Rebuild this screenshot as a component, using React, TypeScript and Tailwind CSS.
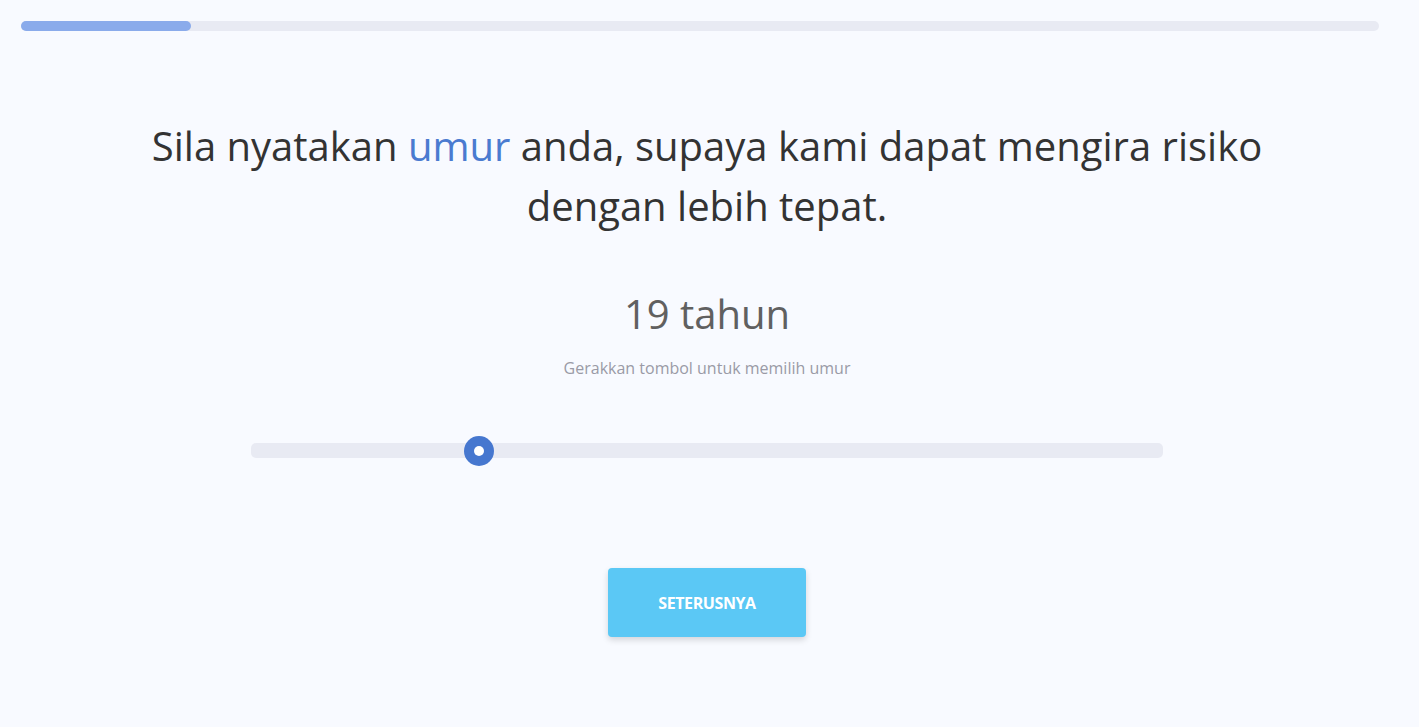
export default function App() {
  const age = 19;
  const pct = 25;
  return (
    <div
      className="min-h-screen w-full bg-[#f8faff] text-[#333]"
      style={{ fontFamily: '"Open Sans", "Noto Sans", sans-serif' }}
    >
      <div className="px-[21px] pt-[21px]">
        <div className="h-[10px] w-[1358px] rounded-full bg-[#e8eaf3]">
          <div className="h-full w-[170px] rounded-full bg-[#8aabeb]" />
        </div>
      </div>

      <div className="flex flex-col items-center pr-[5px]">
        <h1 className="mt-[85px] w-[1140px] text-center text-[40px] leading-[60px] font-normal text-[#333]">
          Sila nyatakan <span className="text-[#4a7bd0]">umur</span> anda, supaya kami dapat mengira risiko
          dengan lebih tepat.
        </h1>

        <div className="mt-[48px] text-[40px] leading-[60px] text-[#606060]">{age} tahun</div>
        <div className="mt-[12px] text-[16px] leading-[24px] text-[#9a9aa6]">
          Gerakkan tombol untuk memilih umur
        </div>

        <div className="relative mt-[63px] h-[15px] w-[912px] rounded-[5px] bg-[#e8eaf3]">
          <div
            className="absolute top-1/2 flex h-[30px] w-[30px] -translate-x-1/2 -translate-y-1/2 items-center justify-center rounded-full bg-[#4677cf]"
            style={{ left: `${pct}%` }}
          >
            <div className="h-[10px] w-[10px] rounded-full bg-white" />
          </div>
        </div>

        <button className="mt-[110px] flex h-[69px] w-[198px] items-center justify-center rounded-[4px] bg-[#5bc8f5] text-[16px] font-bold tracking-[-0.4px] text-white shadow-[0_3px_6px_rgba(0,0,0,0.15)]">
          SETERUSNYA
        </button>
      </div>
    </div>
  );
}
